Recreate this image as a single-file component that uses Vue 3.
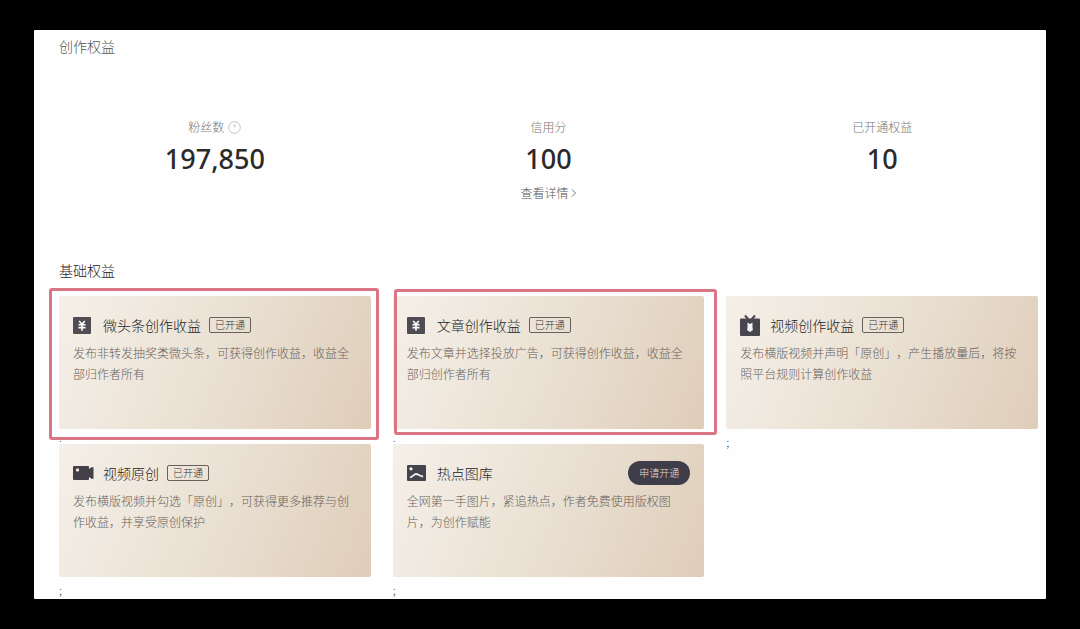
<script setup>
const stats = [
  { label: '粉丝数', value: '197,850', hint: true },
  { label: '信用分', value: '100', link: '查看详情' },
  { label: '已开通权益', value: '10' },
]

const benefits = [
  { icon: 'yuan', title: '微头条创作收益', open: true, frame: 'frame-wide', text: '发布非转发抽奖类微头条，可获得创作收益，收益全部归作者所有' },
  { icon: 'yuan', title: '文章创作收益', open: true, frame: 'frame-shifted', text: '发布文章并选择投放广告，可获得创作收益，收益全部归创作者所有' },
  { icon: 'tv', title: '视频创作收益', open: true, text: '发布横版视频并声明「原创」，产生播放量后，将按照平台规则计算创作收益' },
  { icon: 'camera', title: '视频原创', open: true, text: '发布横版视频并勾选「原创」，可获得更多推荐与创作收益，并享受原创保护' },
  { icon: 'image', title: '热点图库', open: false, text: '全网第一手图片，紧追热点，作者免费使用版权图片，为创作赋能' },
]
</script>

<template>
  <main class="panel">
    <h1 class="heading muted">创作权益</h1>
    <section class="stats">
      <div v-for="s in stats" :key="s.label" class="stat">
        <div class="label">
          {{ s.label }}
          <svg v-if="s.hint" width="13" height="13" viewBox="0 0 13 13" fill="none" stroke="#b5b5b5">
            <circle cx="6.5" cy="6.5" r="5.8" stroke-width="0.8" />
            <path d="M5.200 4.600C5.400 3.400 7.400 3.400 7.400 4.800C7.400 5.600 6.500 5.600 6.500 6.600" stroke-width="0.8" />
          </svg>
        </div>
        <div class="value">{{ s.value }}</div>
        <a v-if="s.link" class="link" href="#">{{ s.link }}
          <svg width="6" height="10" viewBox="0 0 6 10" fill="none" stroke="#777"><path d="M1 1.500L4.500 5L1 8.500" /></svg>
        </a>
      </div>
    </section>

    <h2 class="heading">基础权益</h2>
    <section class="grid">
      <div v-for="b in benefits" :key="b.title" class="cell">
        <article class="card">
          <header class="card-head">
            <svg v-if="b.icon === 'yuan'" class="icon" viewBox="0 0 20 20">
              <rect x="0" y="2" width="18" height="17" rx="1" fill="#4f4d53" />
              <path d="M6.200 6L9 9.200L11.800 6M5.500 9.800H12.500M5.500 12.600H12.500M9 9.200V15.800" fill="none" stroke="#fff" stroke-width="1.6" />
            </svg>
            <svg v-else-if="b.icon === 'tv'" class="icon" viewBox="0 0 20 20">
              <path d="M5 0.500L8.500 4.500M15 0.500L11.500 4.500" fill="none" stroke="#47464e" stroke-width="2" />
              <rect x="0" y="3.500" width="20" height="17.500" rx="1" fill="#47464e" />
              <path d="M7.500 7.500L10 9L12.500 7.500V13L13 15L10 17L7 15L7.500 13Z" fill="#f5f2f5" />
            </svg>
            <svg v-else-if="b.icon === 'camera'" class="icon" viewBox="0 0 20 20">
              <path d="M1 3H15Q16 3 16 4V6L18.500 4.200H20.500V15.800H18.500L16 14V16Q16 17 15 17H1Q0 17 0 16V4Q0 3 1 3Z" fill="#434147" />
              <rect x="3" y="5.500" width="3" height="3" rx="1" fill="#f5f0eb" />
            </svg>
            <svg v-else class="icon" viewBox="0 0 20 20">
              <rect x="0" y="2" width="19" height="16" rx="1" fill="#45444d" />
              <circle cx="4" cy="5.800" r="1.600" fill="#fff" />
              <path d="M3 14.500C6 13.500 7.200 11 9 11C11 11 12.500 12.800 16 13.500" fill="none" stroke="#f2eef2" stroke-width="1.800" />
            </svg>
            <h3 class="title">{{ b.title }}</h3>
            <span v-if="b.open" class="badge">已开通</span>
            <button v-else class="apply" type="button">申请开通</button>
          </header>
          <p class="text">{{ b.text }}</p>
          <div v-if="b.frame" class="frame" :class="b.frame"></div>
        </article>
        <div class="tail">;</div>
      </div>
    </section>
  </main>
</template>

<style>
body {
  background: #000;
}
</style>

<style scoped>
.panel {
  box-sizing: border-box;
  margin: 30px 34px;
  padding: 6px 8px 7px 25px;
  background: #fefefe;
  border-radius: 1px;
  color: #333;
  font-family: "Noto Sans CJK SC", "Noto Sans", sans-serif;
  font-weight: 300;
  text-spacing-trim: space-all;
}
.heading {
  margin: 0;
  font-size: 14px;
  line-height: 20px;
  font-weight: 300;
  color: #222;
}
.muted {
  color: #555;
}
.stats,
.grid {
  display: grid;
  grid-template-columns: repeat(3, 1fr);
  column-gap: 22px;
}
.stats {
  box-sizing: border-box;
  padding-top: 61px;
  min-height: 204px;
}
.stat {
  display: flex;
  flex-direction: column;
  align-items: center;
}
.label {
  display: flex;
  align-items: center;
  gap: 4px;
  font-size: 12px;
  line-height: 20px;
  color: #777;
}
.value {
  margin-top: 2px;
  font-family: "Noto Sans", sans-serif;
  font-size: 27px;
  line-height: 40px;
  font-weight: 500;
  color: #2a2a2a;
}
.link {
  display: flex;
  align-items: center;
  gap: 2px;
  margin-top: 4px;
  font-size: 12px;
  line-height: 20px;
  color: #555;
  text-decoration: none;
}
.grid {
  padding-top: 16px;
}
.card {
  position: relative;
  z-index: 1;
  box-sizing: border-box;
  min-height: 133px;
  padding: 18px 14px 0;
  border-radius: 2px;
  background: linear-gradient(113deg, #f4efe8 0%, #efe7dc 30%, #e7dccd 62%, #dfcdb9 100%);
}
.card-head {
  display: flex;
  align-items: center;
  height: 22px;
}
.icon {
  flex: none;
  width: 20px;
  height: 20px;
  overflow: visible;
}
.title {
  margin: 0 8px 0 10px;
  font-size: 14px;
  line-height: 22px;
  font-weight: 300;
  color: #222;
}
.badge {
  padding: 0 5px;
  border: 1px solid #66615c;
  border-radius: 2px;
  font-size: 10px;
  line-height: 14px;
  color: #333;
}
.apply {
  margin-left: auto;
  padding: 0 11px;
  border: 0;
  border-radius: 12px;
  background: #3e3d49;
  color: #e6d9d0;
  font: inherit;
  font-size: 10px;
  line-height: 24px;
}
.text {
  margin: 6px 0 0;
  font-size: 12px;
  line-height: 21px;
  color: #68625c;
}
.frame {
  position: absolute;
  border: 3px solid #db7584;
  border-radius: 3px;
}
.frame-wide {
  inset: -8px -8px -11px -10px;
}
.frame-shifted {
  inset: -7px -13px -6px 1px;
}
.tail {
  height: 15px;
  font-size: 12px;
  line-height: 26px;
  color: #444;
}
</style>
